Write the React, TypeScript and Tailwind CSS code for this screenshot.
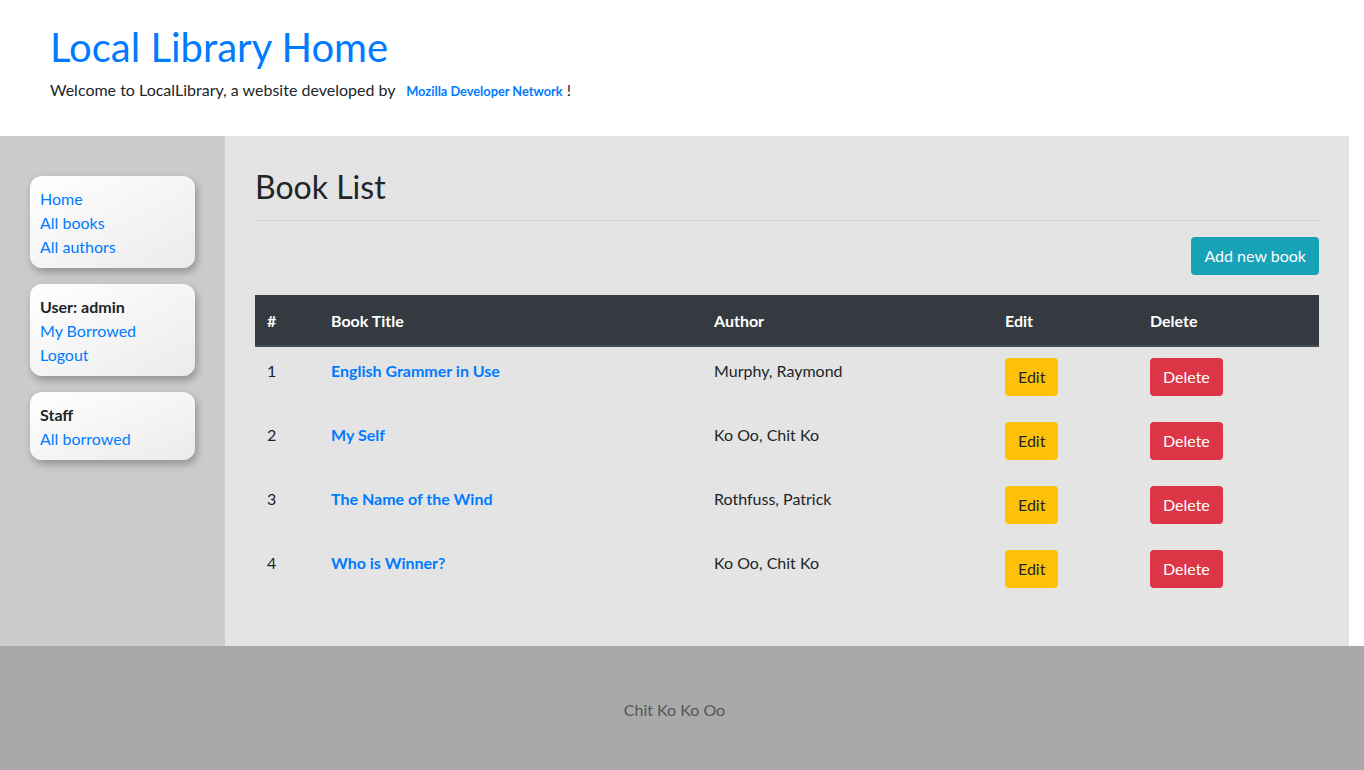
import React from "react";

const books = [
  { id: 1, title: "English Grammer in Use", author: "Murphy, Raymond" },
  { id: 2, title: "My Self", author: "Ko Oo, Chit Ko" },
  { id: 3, title: "The Name of the Wind", author: "Rothfuss, Patrick" },
  { id: 4, title: "Who is Winner?", author: "Ko Oo, Chit Ko" },
];

const font = { fontFamily: "Lato, 'Noto Sans', sans-serif" };

function SideCard({ children }: { children: React.ReactNode }) {
  return (
    <div className="rounded-xl bg-gradient-to-br from-white to-[#ebebeb] px-[10px] pt-[11px] pb-[9px] shadow-[2px_4px_8px_rgba(0,0,0,0.3)] text-[16px] leading-[24px]">
      {children}
    </div>
  );
}

export default function App() {
  return (
    <div className="min-h-[770px] bg-white text-[#212529]" style={font}>
      <header className="h-[136px] px-[50px] pt-[23px]">
        <h1 className="text-[40px] leading-[48px] text-[#007bff]">Local Library Home</h1>
        <p className="mt-[7px] text-[16px] leading-[24px]">
          Welcome to LocalLibrary, a website developed by{" "}
          <a className="ml-[7px] text-[12.8px] font-bold text-[#007bff]">Mozilla Developer Network</a> !
        </p>
      </header>

      <div className="flex w-[1349px]">
        <aside className="w-[225px] shrink-0 bg-[#cccccc] pl-[30px] pr-[30px] pt-[40px]">
          <div className="flex flex-col gap-[16px]">
            <SideCard>
              <a className="block text-[#007bff]">Home</a>
              <a className="block text-[#007bff]">All books</a>
              <a className="block text-[#007bff]">All authors</a>
            </SideCard>
            <SideCard>
              <div className="font-bold">User: admin</div>
              <a className="block text-[#007bff]">My Borrowed</a>
              <a className="block text-[#007bff]">Logout</a>
            </SideCard>
            <SideCard>
              <div className="font-bold">Staff</div>
              <a className="block text-[#007bff]">All borrowed</a>
            </SideCard>
          </div>
        </aside>

        <main className="flex-1 bg-[#e4e4e4] px-[30px] pt-[31px] pb-[44px]">
          <h2 className="text-[32px] leading-[40px] font-normal">Book List</h2>
          <hr className="mt-[13px] border-t border-[#d0d0d0]" />
          <div className="mt-[16px] flex justify-end">
            <button className="h-[38px] rounded bg-[#17a2b8] px-[13px] text-[16px] text-white">Add new book</button>
          </div>
          <table className="mt-[20px] w-full border-collapse text-[16px] leading-[24px]">
            <thead>
              <tr className="bg-[#343a40] text-white">
                <th className="w-[64px] border-b-2 border-[#454d55] p-[12px] pt-[14px] text-left font-bold">#</th>
                <th className="w-[383px] border-b-2 border-[#454d55] p-[12px] pt-[14px] text-left font-bold">Book Title</th>
                <th className="w-[291px] border-b-2 border-[#454d55] p-[12px] pt-[14px] text-left font-bold">Author</th>
                <th className="w-[145px] border-b-2 border-[#454d55] p-[12px] pt-[14px] text-left font-bold">Edit</th>
                <th className="border-b-2 border-[#454d55] p-[12px] pt-[14px] text-left font-bold">Delete</th>
              </tr>
            </thead>
            <tbody>
              {books.map((b, i) => (
                <tr key={b.id} className={i > 0 ? "border-t border-[#dee2e6]" : ""}>
                  <td className="px-[12px] pt-[12px] pb-[13px] align-top">{b.id}</td>
                  <td className="px-[12px] pt-[12px] pb-[13px] align-top font-bold text-[#007bff]">{b.title}</td>
                  <td className="px-[12px] pt-[12px] pb-[13px] align-top">{b.author}</td>
                  <td className="px-[12px] pt-[11px] pb-[14px] align-top">
                    <button className="h-[38px] rounded bg-[#ffc107] px-[13px] text-[#212529]">Edit</button>
                  </td>
                  <td className="px-[12px] pt-[11px] pb-[14px] align-top">
                    <button className="h-[38px] rounded bg-[#dc3545] px-[13px] text-white">Delete</button>
                  </td>
                </tr>
              ))}
            </tbody>
          </table>
        </main>
      </div>

      <footer className="h-[124px] bg-[#a9a9a9]">
        <div className="flex h-full w-[1349px] items-center justify-center pt-[4px] text-[16px] text-[#555555]">Chit Ko Ko Oo</div>
      </footer>
    </div>
  );
}
